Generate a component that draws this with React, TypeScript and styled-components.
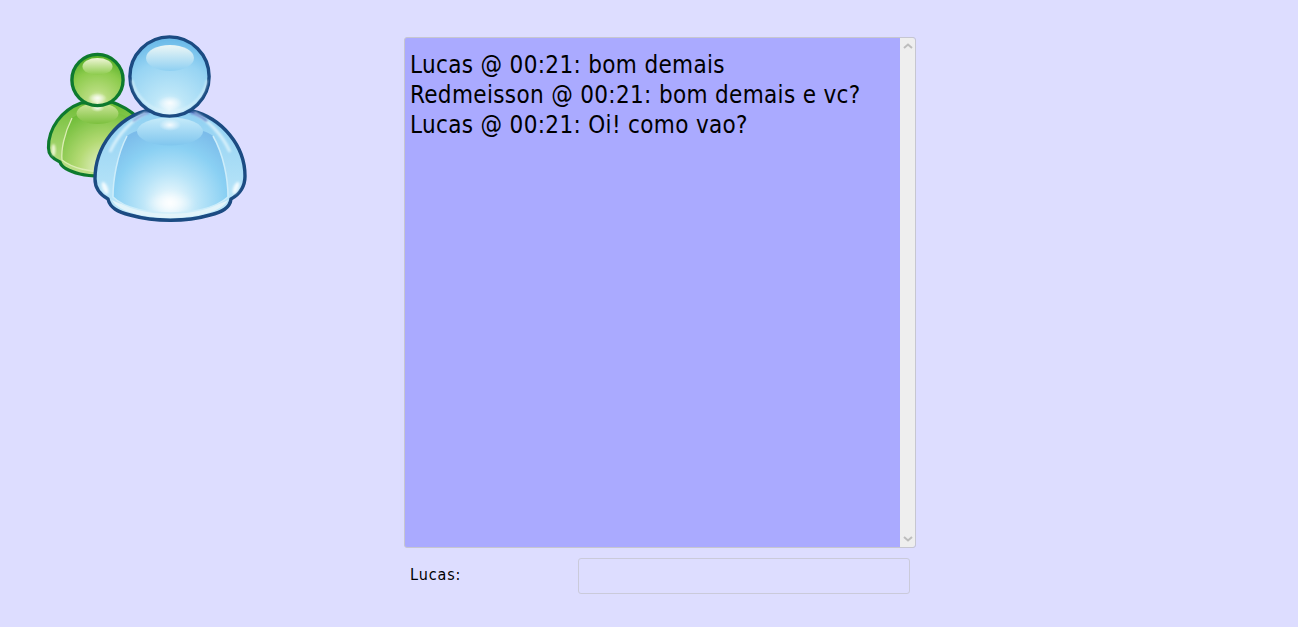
import styled, { createGlobalStyle } from 'styled-components';

const messages = [
  'Lucas @ 00:21: bom demais',
  'Redmeisson @ 00:21: bom demais e vc?',
  'Lucas @ 00:21: Oi! como vao?',
];

function BuddyIcon() {
  return (
    <Icon viewBox='30 20 240 220' aria-label='Messenger'>
      <defs>
        <filter id='upscale' x='-5%' y='-5%' width='110%' height='110%'>
          <feGaussianBlur stdDeviation='0.45' />
        </filter>
        <filter id='soft' x='-30%' y='-30%' width='160%' height='160%'>
          <feGaussianBlur stdDeviation='1' />
        </filter>
        <filter id='softer' x='-30%' y='-30%' width='160%' height='160%'>
          <feGaussianBlur stdDeviation='2.5' />
        </filter>
        <radialGradient id='spot'>
          <stop offset='0%' stopColor='#ffffff' stopOpacity='0.85' />
          <stop offset='100%' stopColor='#ffffff' stopOpacity='0' />
        </radialGradient>

        <radialGradient id='greenHead' cx='50%' cy='92%' r='85%'>
          <stop offset='0%' stopColor='#eef6d4' />
          <stop offset='25%' stopColor='#b6dc7c' />
          <stop offset='70%' stopColor='#8ccb4c' />
          <stop offset='100%' stopColor='#5cb22c' />
        </radialGradient>
        <radialGradient id='greenPanel' gradientUnits='userSpaceOnUse' cx='106' cy='168' r='62'>
          <stop offset='0%' stopColor='#eef4d8' />
          <stop offset='45%' stopColor='#b4da74' />
          <stop offset='100%' stopColor='#6abb34' />
        </radialGradient>
        <linearGradient id='greenCap' x1='0' y1='0' x2='0' y2='1'>
          <stop offset='0%' stopColor='#eff6d6' />
          <stop offset='100%' stopColor='#8ccb4c' />
        </linearGradient>
        <linearGradient id='greenChest' x1='0' y1='0' x2='0' y2='1'>
          <stop offset='0%' stopColor='#cfe79c' />
          <stop offset='100%' stopColor='#7cc03e' />
        </linearGradient>
        <linearGradient id='greenArm' x1='0' y1='0' x2='0' y2='1'>
          <stop offset='0%' stopColor='#6fbd36' />
          <stop offset='100%' stopColor='#c4e28e' />
        </linearGradient>

        <radialGradient id='blueHead' cx='50%' cy='92%' r='88%'>
          <stop offset='0%' stopColor='#eaf8fd' />
          <stop offset='25%' stopColor='#bce6f8' />
          <stop offset='70%' stopColor='#97d4f3' />
          <stop offset='100%' stopColor='#6cbbe9' />
        </radialGradient>
        <radialGradient id='bluePanel' gradientUnits='userSpaceOnUse' cx='170' cy='203' r='78'>
          <stop offset='0%' stopColor='#f8fdfe' />
          <stop offset='38%' stopColor='#b8e4f8' />
          <stop offset='72%' stopColor='#8ad0f3' />
          <stop offset='100%' stopColor='#7cbcea' />
        </radialGradient>
        <linearGradient id='blueChest' x1='0' y1='0' x2='0' y2='1'>
          <stop offset='0%' stopColor='#c6ebfa' />
          <stop offset='100%' stopColor='#80c6ee' />
        </linearGradient>
        <linearGradient id='blueCap' x1='0' y1='0' x2='0' y2='1'>
          <stop offset='0%' stopColor='#ecf7f6' />
          <stop offset='100%' stopColor='#8fd0f2' />
        </linearGradient>
        <linearGradient id='blueArm' x1='0' y1='0' x2='0' y2='1'>
          <stop offset='0%' stopColor='#8fd0f2' />
          <stop offset='100%' stopColor='#c4eafa' />
        </linearGradient>
      </defs>

      <g filter='url(#upscale)'>
        {/* green buddy behind */}
        <path
          d='M81 103 C62 110 48 128 48.5 148 C48.5 155 53 159 60 162 C62 169 72 172 80 174 C88 176 92 176 100 176 L136 116 C128 109 120 105 112 102 Z'
          fill='url(#greenArm)'
          stroke='#0f7a2e'
          strokeWidth='3.2'
        />
        <path
          d='M72 118 C64 134 61 150 62 160 C72 168 90 172 104 172 L136 122 C120 108 86 108 72 118 Z'
          fill='url(#greenPanel)'
        />
        <path d='M72 118 C64 134 61 150 62 160 C72 168 90 172 104 172' fill='none' stroke='#dcedb4' strokeWidth='1.3' />
        <ellipse cx='97.5' cy='113.5' rx='21' ry='10.5' fill='url(#greenChest)' />
        <ellipse cx='97.5' cy='108' rx='7' ry='4' fill='url(#spot)' />
        <ellipse cx='53.5' cy='150' rx='2' ry='6' fill='#eef6d4' filter='url(#soft)' />
        <circle cx='97.5' cy='80' r='25.6' fill='url(#greenHead)' stroke='#0f7a2e' strokeWidth='3.4' />
        <ellipse cx='97.5' cy='66.5' rx='15' ry='8.5' fill='url(#greenCap)' />
        <ellipse cx='97.5' cy='98' rx='9' ry='5' fill='url(#spot)' />

        {/* blue buddy in front */}
        <path
          d='M146 111 C118 118 95 146 95 179 C95 187 99 194 108 199 C110 208 118 212 130 215 C155 222 186 222 210 215 C222 212 230 208 231 199 C240 194 245 187 245 176 C245 146 222 118 192 111 Z'
          fill='url(#blueArm)'
          stroke='#1a4b82'
          strokeWidth='3.4'
        />
        <path
          d='M112 200 C118 213 150 218 170 218 C190 218 222 213 228 200 C210 212 130 212 112 200 Z'
          fill='#e2f4fa'
        />
        <path
          d='M127 136 C117 155 113 180 113 197 C125 209 150 213 170 213 C190 213 215 209 228 197 C228 180 224 155 213 136 C200 124 140 124 127 136 Z'
          fill='url(#bluePanel)'
        />
        <path
          d='M127 136 C117 155 113 180 113 197 C125 209 150 213 170 213 C190 213 215 209 228 197 C228 180 224 155 213 136'
          fill='none'
          stroke='#cdedfa'
          strokeWidth='1.5'
        />
        <path d='M146 113 C132 120 118 134 110 152' fill='none' stroke='#d5f0fb' strokeWidth='3' filter='url(#soft)' />
        <path d='M194 113 C208 120 222 134 230 152' fill='none' stroke='#d5f0fb' strokeWidth='3' filter='url(#soft)' />
        <path d='M190 112 C196 114 202 117 207 121' fill='none' stroke='#5a76c4' strokeWidth='2' filter='url(#soft)' />
        <path d='M150 112 C144 114 138 117 133 121' fill='none' stroke='#7a96d4' strokeWidth='2' filter='url(#soft)' />
        <ellipse cx='170' cy='131.5' rx='33' ry='14' fill='url(#blueChest)' />
        <ellipse cx='170' cy='125' rx='11' ry='6' fill='url(#spot)' />
        <ellipse cx='170' cy='203' rx='24' ry='11' fill='url(#spot)' filter='url(#softer)' />
        <ellipse cx='105' cy='188' rx='2.6' ry='6.5' fill='#f2fbfe' transform='rotate(-22 105 188)' filter='url(#soft)' />
        <ellipse cx='236' cy='188' rx='2.6' ry='6.5' fill='#f2fbfe' transform='rotate(22 236 188)' filter='url(#soft)' />
        <circle cx='169.5' cy='76.5' r='39.6' fill='url(#blueHead)' stroke='#1a4b82' strokeWidth='3.4' />
        <path d='M132 80 C136 98 152 112 170 112 C188 112 204 98 207 80' fill='none' stroke='#dff4fc' strokeWidth='1.4' filter='url(#soft)' />
        <ellipse cx='170' cy='58' rx='24' ry='13' fill='url(#blueCap)' />
        <ellipse cx='170' cy='103' rx='12' ry='7' fill='url(#spot)' />
      </g>
    </Icon>
  );
}

function App() {
  return (
    <>
      <GlobalStyle />
      <Page>
        <Sidebar>
          <BuddyIcon />
        </Sidebar>
        <Main>
          <ChatBox>
            <MessageList>
              {messages.map((message) => (
                <div key={message}>{message}</div>
              ))}
            </MessageList>
            <ScrollTrack>
              <Arrow viewBox='0 0 10 6'>
                <path d='M1 5 L5 1.5 L9 5' />
              </Arrow>
              <Arrow viewBox='0 0 10 6'>
                <path d='M1 1 L5 4.5 L9 1' />
              </Arrow>
            </ScrollTrack>
          </ChatBox>
          <InputRow>
            <NameLabel>Lucas:</NameLabel>
            <MessageInput type='text' />
          </InputRow>
        </Main>
      </Page>
    </>
  );
}

const GlobalStyle = createGlobalStyle`
  html, body {
    margin: 0;
    padding: 0;
    background: #ddddff;
  }
`;

const Page = styled.div`
  display: flex;
  height: 627px;
  overflow: hidden;
  font-family: 'DejaVu Sans Condensed', 'DejaVu Sans', sans-serif;
  font-stretch: condensed;
  color: #000;
`;

const Sidebar = styled.div`
  width: 404px;
  flex-shrink: 0;
  padding: 20px 0 0 30px;
  box-sizing: border-box;
`;

const Icon = styled.svg`
  display: block;
  width: 240px;
  height: 220px;
`;

const Main = styled.div`
  width: 512px;
  padding-top: 37px;
  display: flex;
  flex-direction: column;
`;

const ChatBox = styled.div`
  height: 511px;
  box-sizing: border-box;
  display: flex;
  background: #aaaaff;
  border: 1px solid #c6c6d0;
  border-radius: 3px;
  overflow: hidden;
`;

const MessageList = styled.div`
  flex: 1;
  padding: 12px 5px;
  font-size: 24px;
  line-height: 30px;
  letter-spacing: 0.33px;
`;

const ScrollTrack = styled.div`
  width: 15px;
  background: #eeeeee;
  display: flex;
  flex-direction: column;
  justify-content: space-between;
  align-items: center;
  padding: 5px 0;
  box-sizing: border-box;
`;

const Arrow = styled.svg`
  width: 10px;
  height: 6px;
  fill: none;
  stroke: #bdbdbd;
  stroke-width: 2;
`;

const InputRow = styled.div`
  display: flex;
  align-items: center;
  margin-top: 10px;
  padding-left: 6px;
`;

const NameLabel = styled.label`
  width: 168px;
  font-size: 16px;
  line-height: 20px;
  letter-spacing: 0.9px;
  padding-bottom: 2px;
`;

const MessageInput = styled.input`
  width: 332px;
  height: 36px;
  box-sizing: border-box;
  background: transparent;
  border: 1px solid #cacada;
  border-radius: 3px;
  outline: none;
`;

export default App;
